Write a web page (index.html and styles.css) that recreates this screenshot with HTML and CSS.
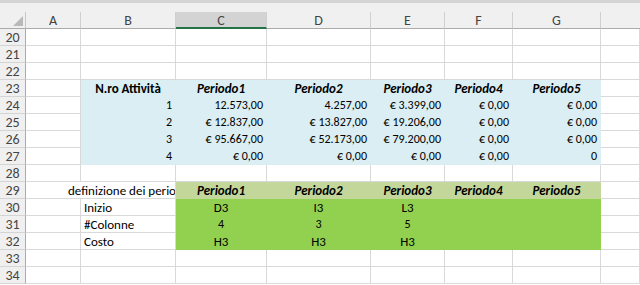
FILE: index.html
```html
<!DOCTYPE html>
<html lang="it">
<head>
<meta charset="utf-8">
<title>Foglio</title>
<link rel="stylesheet" href="styles.css">
</head>
<body>
<div class="sheet">
  <div class="topbar"></div>
  <div class="grid">
    <div class="corner"><svg width="26" height="17" viewBox="0 0 26 17"><polygon points="23,4 23,14 13,14" fill="#b9b9b9"/></svg></div>
    <div class="ch">A</div><div class="ch">B</div><div class="ch sel">C</div><div class="ch">D</div><div class="ch">E</div><div class="ch">F</div><div class="ch">G</div><div class="ch last"></div>

    <div class="rh">20</div><div class="c"></div><div class="c"></div><div class="c"></div><div class="c"></div><div class="c"></div><div class="c"></div><div class="c"></div><div class="c"></div>
    <div class="rh">21</div><div class="c"></div><div class="c"></div><div class="c"></div><div class="c"></div><div class="c"></div><div class="c"></div><div class="c"></div><div class="c"></div>
    <div class="rh">22</div><div class="c"></div><div class="c"></div><div class="c"></div><div class="c"></div><div class="c"></div><div class="c"></div><div class="c"></div><div class="c"></div>

    <div class="rh">23</div><div class="c"></div><div class="c blue m b">N.ro Attività</div><div class="c blue m b i">Periodo1</div><div class="c blue m b i">Periodo2</div><div class="c blue m b i">Periodo3</div><div class="c blue m b i">Periodo4</div><div class="c blue m b i">Periodo5</div><div class="c"></div>
    <div class="rh">24</div><div class="c"></div><div class="c blue r n">1</div><div class="c blue r n">12.573,00</div><div class="c blue r n">4.257,00</div><div class="c blue r n">€ 3.399,00</div><div class="c blue r n">€ 0,00</div><div class="c blue r n">€ 0,00</div><div class="c"></div>
    <div class="rh">25</div><div class="c"></div><div class="c blue r n">2</div><div class="c blue r n">€ 12.837,00</div><div class="c blue r n">€ 13.827,00</div><div class="c blue r n">€ 19.206,00</div><div class="c blue r n">€ 0,00</div><div class="c blue r n">€ 0,00</div><div class="c"></div>
    <div class="rh">26</div><div class="c"></div><div class="c blue r n">3</div><div class="c blue r n">€ 95.667,00</div><div class="c blue r n">€ 52.173,00</div><div class="c blue r n">€ 79.200,00</div><div class="c blue r n">€ 0,00</div><div class="c blue r n">€ 0,00</div><div class="c"></div>
    <div class="rh">27</div><div class="c"></div><div class="c blue r n">4</div><div class="c blue r n">€ 0,00</div><div class="c blue r n">€ 0,00</div><div class="c blue r n">€ 0,00</div><div class="c blue r n">€ 0,00</div><div class="c blue r n">0</div><div class="c"></div>

    <div class="rh">28</div><div class="c"></div><div class="c"></div><div class="c"></div><div class="c"></div><div class="c"></div><div class="c"></div><div class="c"></div><div class="c"></div>

    <div class="rh">29</div><div class="c span2 spill">definizione dei periodi</div><div class="c olive m b i">Periodo1</div><div class="c olive m b i">Periodo2</div><div class="c olive m b i">Periodo3</div><div class="c olive m b i">Periodo4</div><div class="c olive m b i">Periodo5</div><div class="c"></div>
    <div class="rh">30</div><div class="c"></div><div class="c l">Inizio</div><div class="c green m">D3</div><div class="c green m">I3</div><div class="c green m">L3</div><div class="c green"></div><div class="c green"></div><div class="c"></div>
    <div class="rh">31</div><div class="c"></div><div class="c l">#Colonne</div><div class="c green m n">4</div><div class="c green m n">3</div><div class="c green m n">5</div><div class="c green"></div><div class="c green"></div><div class="c"></div>
    <div class="rh">32</div><div class="c"></div><div class="c l">Costo</div><div class="c green m">H3</div><div class="c green m">H3</div><div class="c green m">H3</div><div class="c green"></div><div class="c green"></div><div class="c"></div>

    <div class="rh">33</div><div class="c"></div><div class="c"></div><div class="c"></div><div class="c"></div><div class="c"></div><div class="c"></div><div class="c"></div><div class="c"></div>
    <div class="rh">34</div><div class="c"></div><div class="c"></div><div class="c"></div><div class="c"></div><div class="c"></div><div class="c"></div><div class="c"></div><div class="c"></div>
  </div>
</div>
</body>
</html>
```

FILE: styles.css
```css
html, body {
  margin: 0;
  padding: 0;
  background: #ffffff;
}

.sheet {
  width: 640px;
  height: 285px;
  overflow: hidden;
  font-family: Carlito, Lato, "Liberation Sans", sans-serif;
  font-size: 13px;
  color: #000000;
}

.topbar {
  height: 12px;
  box-sizing: border-box;
  background: #f0f0f0;
  border-top: 3px solid #d4d4d4;
}

.grid {
  display: grid;
  grid-template-columns: 26px 55px 95px 91px 104px 74px 68px 88px 1fr;
  grid-auto-rows: 17px;
}

.grid > div {
  box-sizing: border-box;
  line-height: 17px;
  white-space: nowrap;
  overflow: hidden;
}

.corner {
  background: #f0f0f0;
  border-right: 1px solid #c8c8c8;
  border-bottom: 1px solid #ababab;
}

.corner svg {
  display: block;
}

.ch {
  background: #f0f0f0;
  color: #444444;
  text-align: center;
  font-size: 14px;
  border-right: 1px solid #d0d0d0;
  border-bottom: 1px solid #ababab;
}

.ch.sel {
  background: #d3d3d3;
  border-bottom: 2px solid #217346;
}

.ch.last {
  border-right: none;
}

.rh {
  background: #f0f0f0;
  color: #444444;
  text-align: center;
  font-size: 14px;
  border-right: 1px solid #ababab;
  border-bottom: 1px solid #d4d4d4;
}

.c {
  border-right: 1px solid #d9d9d9;
  border-bottom: 1px solid #d9d9d9;
  padding: 0 3px;
}

.n { font-size: 12px; }
.r { text-align: right; }
.m { text-align: center; }
.l { text-align: left; }
.b { font-weight: 700; }
.i { font-style: italic; }

.blue {
  background: #daeef3;
  border-color: #daeef3;
}

.olive {
  background: #c4d79b;
  border-color: #c4d79b;
}

.green {
  background: #92d050;
  border-color: #92d050;
}

.span2 {
  grid-column: span 2;
}

.spill {
  padding-left: 42px;
  text-overflow: clip;
}
```
